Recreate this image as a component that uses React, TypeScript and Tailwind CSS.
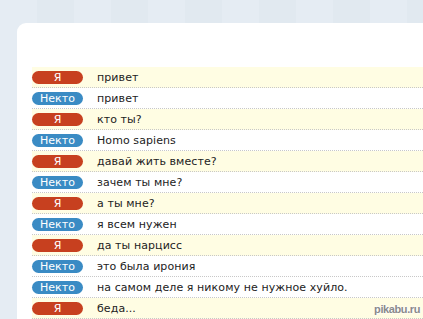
import React from "react";

const rows: [boolean, string][] = [
  [true, "привет"],
  [false, "привет"],
  [true, "кто ты?"],
  [false, "Homo sapiens"],
  [true, "давай жить вместе?"],
  [false, "зачем ты мне?"],
  [true, "а ты мне?"],
  [false, "я всем нужен"],
  [true, "да ты нарцисс"],
  [false, "это была ирония"],
  [false, "на самом деле я никому не нужное хуйло."],
  [true, "беда..."],
];

export default function App() {
  return (
    <div className="relative w-[423px] h-[319px] overflow-hidden bg-[repeating-linear-gradient(90deg,#e5ecf3_0px,#e5ecf3_37px,#e1e9f0_37px,#e1e9f0_74px)] pt-[23px] pl-[17px] font-['DejaVu_Sans',sans-serif]">
      <div className="bg-white rounded-tl-[9px] h-[400px] pt-[44px] pl-[15px]">
        {rows.map(([me, text], i) => (
          <div
            key={i}
            className={`flex items-center h-[21px] border-b border-dotted border-[#c8c8c8] ${me ? "bg-[#fffde3]" : "bg-white"}`}
          >
            <div
              className={`w-[51px] h-[13px] rounded-full flex items-center justify-center text-white text-[11px] leading-none ${me ? "bg-[#c7401f]" : "bg-[#3a8bc4]"}`}
            >
              {me ? "Я" : "Некто"}
            </div>
            <div className="ml-[14px] text-[11px] text-[#222] leading-none tracking-[0.08px]">{text}</div>
          </div>
        ))}
      </div>
      <div className="absolute right-[3px] bottom-[2px] text-[11px] font-bold tracking-[-0.4px] text-[#8a8a8a] font-['Liberation_Sans',sans-serif] [text-shadow:0_0_2px_#fff,0_0_2px_#fff,0_0_1px_#fff]">
        pikabu.ru
      </div>
    </div>
  );
}
